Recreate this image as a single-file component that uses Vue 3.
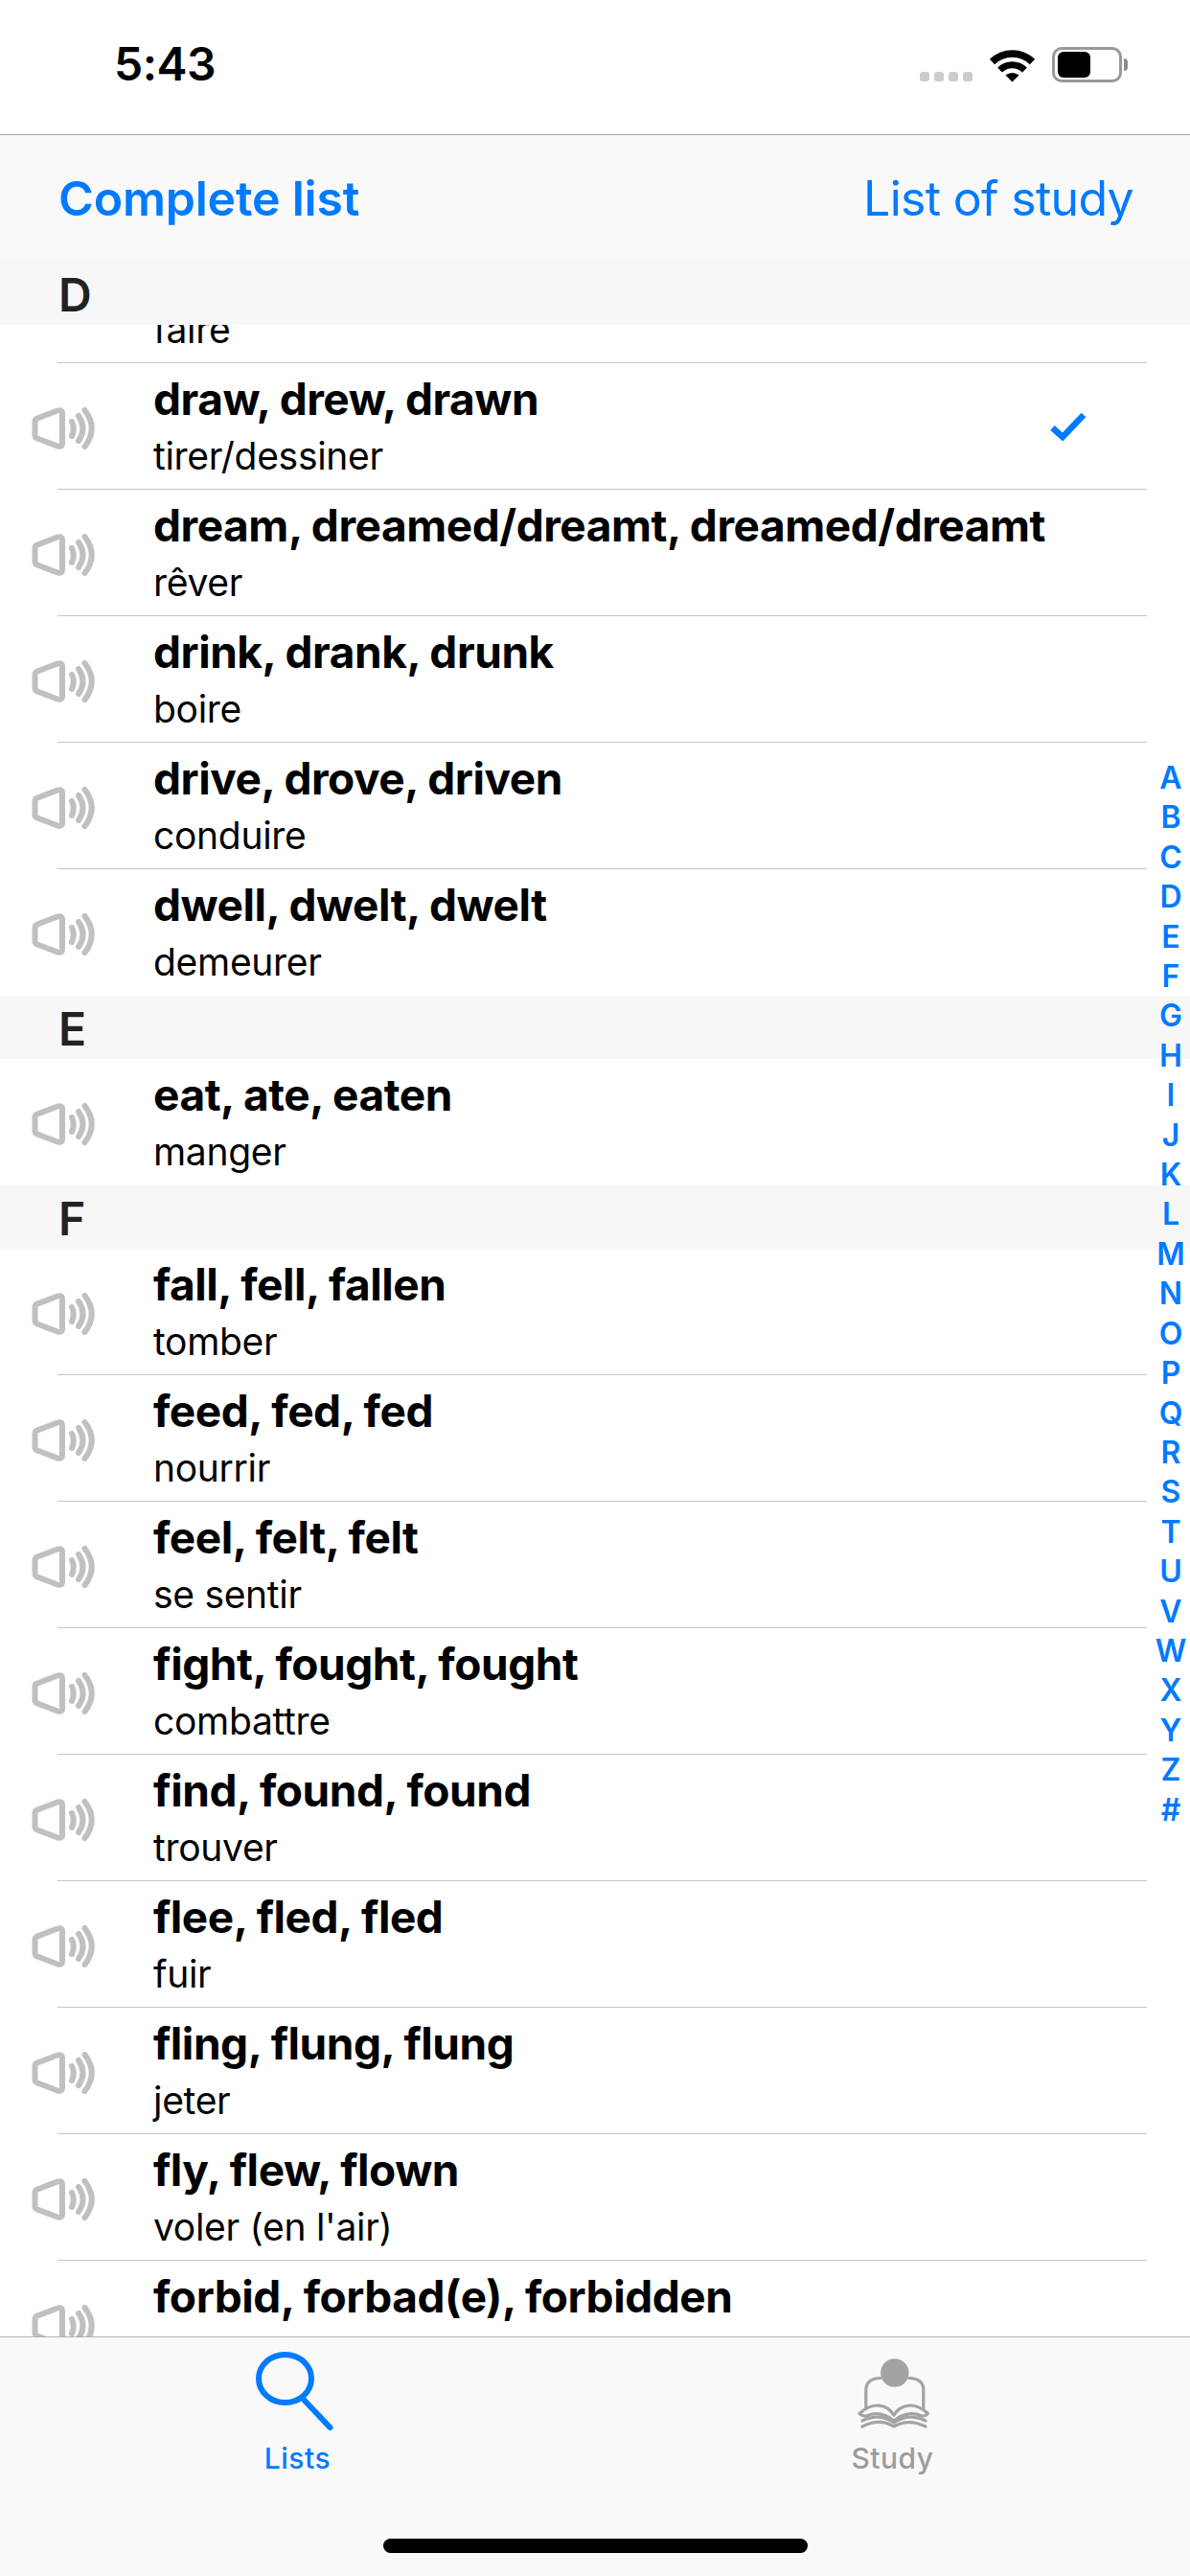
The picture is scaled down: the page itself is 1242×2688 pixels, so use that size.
<script setup>
const sections = [
  {
    letter: 'D',
    verbs: [
      { title: '', sub: 'faire', clipped: true },
      { title: 'draw, drew, drawn', sub: 'tirer/dessiner', checked: true },
      { title: 'dream, dreamed/dreamt, dreamed/dreamt', sub: 'rêver' },
      { title: 'drink, drank, drunk', sub: 'boire' },
      { title: 'drive, drove, driven', sub: 'conduire' },
      { title: 'dwell, dwelt, dwelt', sub: 'demeurer' }
    ]
  },
  {
    letter: 'E',
    verbs: [{ title: 'eat, ate, eaten', sub: 'manger' }]
  },
  {
    letter: 'F',
    verbs: [
      { title: 'fall, fell, fallen', sub: 'tomber' },
      { title: 'feed, fed, fed', sub: 'nourrir' },
      { title: 'feel, felt, felt', sub: 'se sentir' },
      { title: 'fight, fought, fought', sub: 'combattre' },
      { title: 'find, found, found', sub: 'trouver' },
      { title: 'flee, fled, fled', sub: 'fuir' },
      { title: 'fling, flung, flung', sub: 'jeter' },
      { title: 'fly, flew, flown', sub: 'voler (en l\'air)' },
      { title: 'forbid, forbad(e), forbidden', sub: '' }
    ]
  }
]

const alphabet = 'ABCDEFGHIJKLMNOPQRSTUVWXYZ#'.split('')
</script>

<template>
  <div class="screen">
    <header class="status">
      <span class="time">5:43</span>
      <div class="status-icons">
        <div class="signal">
          <i></i><i></i><i></i><i></i>
        </div>
        <svg class="wifi" width="49" height="37" viewBox="0 0 49 37">
          <path d="M3.5 15.5C15 4 34 4 45.5 15.5" fill="none" stroke="#000" stroke-width="7.5" />
          <path d="M11.5 24C19 17 30 17 37.5 24" fill="none" stroke="#000" stroke-width="7" />
          <path d="M24.5 36.5L17.5 29.5C21.5 26 27.5 26 31.5 29.5Z" fill="#000" />
        </svg>
        <div class="battery">
          <div class="battery-fill"></div>
        </div>
        <div class="battery-nub"></div>
      </div>
    </header>

    <nav class="segments">
      <span class="segment active">Complete list</span>
      <span class="segment">List of study</span>
    </nav>

    <main class="list">
      <section v-for="section in sections" :key="section.letter">
        <h2 class="section-head">{{ section.letter }}</h2>
        <div
          v-for="(verb, i) in section.verbs"
          :key="verb.title + verb.sub"
          class="row"
          :class="{ clipped: verb.clipped, divided: i < section.verbs.length - 1 }"
        >
          <svg class="speaker" width="66" height="44" viewBox="0 0 66 44">
            <path
              d="M3.5 15Q3.5 12.5 6 11.5L27 3.5Q32 2 32 6.5V37.5Q32 42 27 40.5L6 32.5Q3.5 31.5 3.5 29Z"
              fill="none"
              stroke="#c0c0c0"
              stroke-width="6"
              stroke-linejoin="round"
            />
            <g fill="none" stroke="#c0c0c0" stroke-width="6" stroke-linecap="round">
              <path d="M42 15Q45.5 22 42 30" />
              <path d="M49 9Q58 22 49 35" />
              <path d="M55.5 3Q70 22 55.5 41" />
            </g>
          </svg>
          <div class="verb">
            <div class="verb-title">{{ verb.title }}</div>
            <div class="verb-sub">{{ verb.sub }}</div>
          </div>
          <svg v-if="verb.checked" class="check" width="38" height="30" viewBox="0 0 38 30">
            <path d="M2.5 16.5L13 26L35 3" fill="none" stroke="#007aff" stroke-width="6.5" />
          </svg>
        </div>
      </section>

      <aside class="index">
        <span v-for="letter in alphabet" :key="letter">{{ letter }}</span>
      </aside>
    </main>

    <footer class="tabbar">
      <div class="tabs">
        <div class="tab active">
          <svg width="90" height="90" viewBox="0 0 90 90">
            <ellipse cx="31.5" cy="32" rx="27.5" ry="25" fill="none" stroke="#007aff" stroke-width="6" />
            <path d="M52 55L78.5 83" fill="none" stroke="#007aff" stroke-width="6" stroke-linecap="round" />
          </svg>
          <span>Lists</span>
        </div>
        <div class="tab">
          <svg width="90" height="90" viewBox="0 0 90 90">
            <circle cx="46.8" cy="26" r="14.7" fill="#a3a3a3" />
            <g fill="none" stroke="#a3a3a3" stroke-width="3.2" stroke-linecap="round" stroke-linejoin="round">
              <path d="M16.8 63V44Q16.8 32 32 31.5" />
              <path d="M76.8 63V44Q76.8 32 61.8 31.5" />
              <path d="M45.8 70C38 58 24 56 10 68.5Q14 72 17 71C26 67 36 68 45.8 76" />
              <path d="M45.8 70C54 58 68 56 81.5 68.5Q78 72 75 71C66 67 56 68 45.8 76" />
              <path d="M13 76C25 70 36 71 45.8 78C56 71 67 70 79 76" />
              <path d="M13 82C25 76 36 76 45.8 82C56 76 67 76 79 82" />
            </g>
          </svg>
          <span>Study</span>
        </div>
      </div>
      <div class="home-indicator"></div>
    </footer>
  </div>
</template>

<style scoped>
.screen {
  width: 1242px;
  height: 2688px;
  display: flex;
  flex-direction: column;
  overflow: hidden;
  background: #fff;
  color: #000;
  font-family: Inter, "Liberation Sans", sans-serif;
}

.status {
  height: 141px;
  flex: none;
  box-sizing: border-box;
  padding: 0 65px 0 119px;
  display: flex;
  justify-content: space-between;
  align-items: flex-start;
  border-bottom: 1px solid #a9a9a9;
}

.time {
  margin-top: 39px;
  font-size: 48px;
  line-height: 56px;
  font-weight: 600;
  letter-spacing: -0.5px;
}

.status-icons {
  display: flex;
  align-items: flex-start;
  margin-top: 49px;
}

.signal {
  display: flex;
  gap: 5px;
  margin-top: 26px;
  margin-right: 17px;
}

.signal i {
  width: 10px;
  height: 10px;
  border-radius: 3px;
  background: #ccc;
}

.wifi {
  margin-right: 17px;
}

.battery {
  width: 73px;
  height: 37px;
  box-sizing: border-box;
  border: 3px solid #999;
  border-radius: 10px;
  padding: 2px 3px;
}

.battery-fill {
  width: 34px;
  height: 100%;
  background: #000;
  border-radius: 6px;
}

.battery-nub {
  width: 4px;
  height: 13px;
  margin: 12px 0 0 2px;
  background: #8c8c8c;
  border-radius: 0 4px 4px 0;
}

.segments {
  height: 132px;
  flex: none;
  box-sizing: border-box;
  padding: 0 59px 0 61px;
  display: flex;
  justify-content: space-between;
  align-items: center;
  background: #f9f9f9;
  color: #007aff;
  font-size: 50px;
  letter-spacing: -0.7px;
}

.segment.active {
  font-weight: 600;
  letter-spacing: -0.2px;
}

.list {
  flex: 1;
  min-height: 0;
  position: relative;
  overflow: hidden;
}

.section-head {
  position: relative;
  z-index: 1;
  height: 66px;
  box-sizing: border-box;
  margin: 0;
  padding: 2px 0 0 61px;
  background: #f7f7f7;
  color: #222;
  font-size: 48px;
  line-height: 66px;
  font-weight: 600;
}

.row {
  position: relative;
  height: 132px;
  box-sizing: border-box;
  display: flex;
  align-items: center;
}

.row.clipped {
  margin-top: -92px;
}

.row.divided::after {
  content: "";
  position: absolute;
  left: 60px;
  right: 45px;
  bottom: 0;
  height: 1px;
  background: #c6c6c8;
}

.speaker {
  flex: none;
  margin: 4px 61px 0 33px;
}

.verb {
  flex: 1;
  min-width: 0;
}

.verb-title {
  min-height: 56px;
  font-size: 46px;
  line-height: 56px;
  font-weight: 700;
  letter-spacing: -0.45px;
}

.verb-sub {
  min-height: 54px;
  margin-top: 5px;
  font-size: 39px;
  line-height: 54px;
  letter-spacing: -0.3px;
}

.check {
  flex: none;
  margin-right: 108px;
}

.index {
  position: absolute;
  top: 518px;
  right: 0;
  width: 40px;
  display: flex;
  flex-direction: column;
  align-items: center;
  z-index: 2;
  color: #007aff;
  font-size: 32px;
  line-height: 41.4px;
  font-weight: 600;
}

.tabbar {
  height: 250px;
  flex: none;
  box-sizing: border-box;
  border-top: 1px solid #b2b2b2;
  background: #f9f9f9;
  display: flex;
  flex-direction: column;
  align-items: center;
}

.tabs {
  width: 100%;
  display: flex;
  padding-top: 11px;
}

.tab {
  flex: 1;
  display: flex;
  flex-direction: column;
  align-items: center;
  color: #9c9c9c;
  font-size: 30px;
  font-weight: 500;
  line-height: 36px;
  letter-spacing: 0.5px;
}

.tab span {
  margin-top: 7px;
}

.tab.active {
  color: #007aff;
}

.home-indicator {
  width: 443px;
  height: 15px;
  margin-top: 66px;
  border-radius: 8px;
  background: #000;
}
</style>

<style>
html,
body {
  margin: 0;
  background: #fff;
}
</style>
